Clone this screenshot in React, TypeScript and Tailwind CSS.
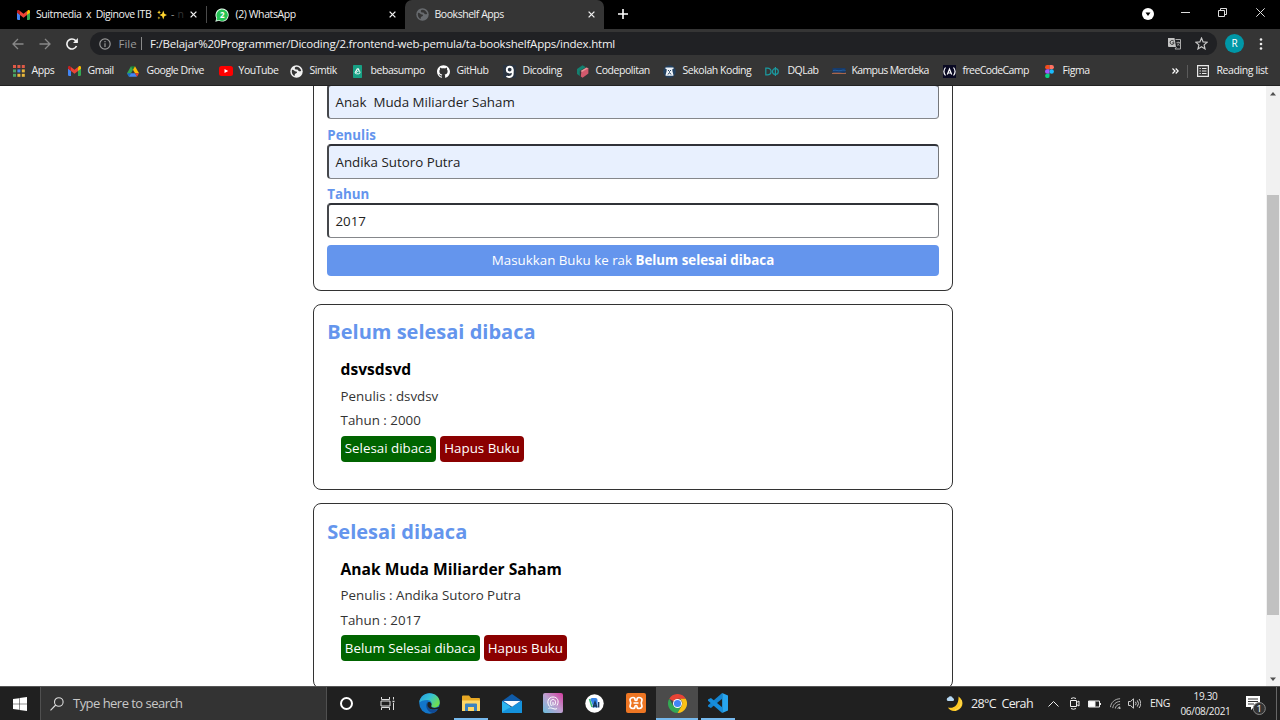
import type { ReactNode } from "react";
import { SiGithub } from "react-icons/si";

const Gmail = () => (
  <svg viewBox="0 0 24 18" className="h-[10px] w-[13px]">
    <path d="M0 2v14.5C0 17.3.7 18 1.5 18H5.5V8L0 4z" fill="#4285f4" />
    <path d="M18.5 18h4c.8 0 1.5-.7 1.5-1.5V2l-5.500 6z" fill="#34a853" />
    <path d="M18.500 2v7L24 5V2.500C24 .3 21.300-.8 19.700.600z" fill="#fbbc04" />
    <path d="M5.500 9V1.500L12 6.500l6.500-5V9L12 14z" fill="#ea4335" />
    <path d="M0 2.500V5l5.500 4V1.500L4.300.600C2.600-.8 0 .3 0 2.500z" fill="#c5221f" />
  </svg>
);

const WhatsApp = () => (
  <svg viewBox="0 0 14 14" className="size-[14px]">
    <path d="M.3 13.700l1-3.500A6.600 6.600 0 1 1 3.900 12.800z" fill="#e8fbee" />
    <path d="M1.400 12.600l.8-2.600A5.700 5.700 0 1 1 4.100 12z" fill="#25c354" />
    <text x="7.300" y="9.900" textAnchor="middle" fontSize="8" fontWeight="700" fontFamily="Open Sans, sans-serif" fill="#fff">2</text>
  </svg>
);

const Globe = ({ dim = false }: { dim?: boolean }) => (
  <svg viewBox="0 0 24 24" className="size-[13px]">
    <circle cx="12" cy="12" r="11.500" fill={dim ? "#686b6f" : "#f1f1f1"} />
    <path d="M3.500 9c3.500-.5 4 3 8 3 2 0 2 3 0 3-3 .5-3 3-2.500 5.500C4.500 19 2.500 14 3.500 9z" fill="#353535" />
    <path d="M10 3.500c5-1.500 9.500 2 10.700 7-3 2-4.700.5-6.200-1.500-1.500-1.500-4 .5-5-1.500S8.500 4.500 10 3.500z" fill="#353535" />
  </svg>
);

const Sparkles = () => (
  <svg viewBox="0 0 12 12" className="h-[10px] w-[10px] shrink-0" fill="#ffd42e">
    <path d="M7.500 .6l1.400 4L12 6 8.900 7.400 7.500 11.400 6.100 7.400 3 6l3.100-1.400zM2.500.3l.7 1.800 1.600.7-1.600.7-.7 1.800-.7-1.800L.2 2.800l1.600-.7zM2.300 7.500l.5 1.500 1.400.5-1.400.5-.5 1.500-.5-1.500-1.400-.5L1.800 9z" />
  </svg>
);

const Close = () => (
  <svg viewBox="0 0 8 8" className="size-[7px]" stroke="#f1f1f1" strokeWidth="1.500">
    <path d="M.7.7l6.600 6.600M7.300.7L.7 7.300" />
  </svg>
);

const AppsGrid = () => (
  <svg viewBox="0 0 12 12" className="ml-[1px] size-[12px]">
    {["#e05a47", "#e05a47", "#e05a47", "#4ba564", "#4d86e8", "#e8b73b", "#4ba564", "#e8b73b", "#e8b73b"].map((c, i) => (
      <rect key={i} x={(i % 3) * 4.4} y={Math.floor(i / 3) * 4.4} width="3" height="3" fill={c} />
    ))}
  </svg>
);

const Drive = () => (
  <svg viewBox="0 0 24 21" className="h-[11px] w-[12px]">
    <path d="M8 0h8l-4 7z" fill="#188038" />
    <path d="M8 0L0 14l4 7 8-14z" fill="#34a853" />
    <path d="M16 0l8 14h-8L12 7z" fill="#fbbc04" />
    <path d="M0 14h8l-4 7z" fill="#1967d2" />
    <path d="M8 14h8l4 7H4z" fill="#4285f4" />
    <path d="M16 14h8l-4 7z" fill="#ea4335" />
  </svg>
);

const YouTube = () => (
  <svg viewBox="0 0 14 10" className="h-[10px] w-[14px]">
    <rect width="14" height="10" rx="2.500" fill="#f00" />
    <path d="M5.500 2.900v4.200L9.200 5z" fill="#fff" />
  </svg>
);

const Bebas = () => (
  <svg viewBox="0 0 9 13" className="ml-[2px] h-[13px] w-[9px]">
    <rect width="9" height="13" rx=".7" fill="#17a084" />
    <path d="M4.800 3.200l1.600 2.500M4.500 3.500L2.500 7" stroke="#fff" strokeWidth="1.200" />
    <path d="M2 7.200q0 1.600 1.500 1.600h2.200Q7 8.800 7 7.200q0-1.300-1.300-1.300-1 0-1.700 1.300z" fill="none" stroke="#e6faf5" />
  </svg>
);

const Dicoding = () => (
  <svg viewBox="0 0 13 13" className="size-[13px]">
    <rect width="13" height="13" fill="#2a3441" />
    <g fill="none" stroke="#fff" strokeWidth="1.900">
      <circle cx="6.700" cy="4.600" r="2.900" />
      <path d="M9.700 4.500v4.200c0 3.500-4.500 3.900-6.200 2.400" />
    </g>
  </svg>
);

const Codepolitan = () => (
  <svg viewBox="0 0 13 13" className="size-[13px]">
    <path d="M6.500.3L1 3.900v5.200l2.800 2V5.700l6.200-3.500z" fill="#14806f" />
    <path d="M5.300 6.700L12.400 2.900v5.500L6.600 12.700l-1.800-1.200z" fill="#d3596c" />
    <path d="M4.500 5.900l6-3.300 1.900.7L6 7z" fill="#f0939a" />
  </svg>
);

const Sekolah = () => (
  <svg viewBox="0 0 13 13" className="size-[13px]">
    <circle cx="6.500" cy="6.500" r="6.300" fill="#23405f" />
    <path d="M2.500 2.500h8v1.500H9.400v2l1 3.700v1.100H2.600V9.700l1-3.700V4H2.500z" fill="#edf2f7" />
    <path d="M5 5l1.500 1.500L8 5M5 9.500l1.500-2L8 9.500" stroke="#23405f" fill="none" />
  </svg>
);

const DQ = () => (
  <svg viewBox="0 0 14 9" className="h-[9px] w-[14px]" fill="none" stroke="#1b9aa0" strokeWidth="1.200">
    <path d="M.8 1.200h1.500c5 0 5 6.600 0 6.600H.8zM10.400 0v9" />
    <circle cx="10.400" cy="4.500" r="2.900" />
  </svg>
);

const Kampus = () => (
  <svg viewBox="0 0 14 8" className="h-[8px] w-[14px]">
    <path d="M.5 1h13v4.700H.5z" fill="#163b6c" />
    <path d="M1 3.500c3-1 5 1 8 0s4 0 4.500 0" stroke="#265f9c" fill="none" />
    <path d="M0 6.100c4-.9 9 .3 14-.3v1H0z" fill="#cf7551" />
  </svg>
);

const Fcc = () => (
  <svg viewBox="0 0 13 13" className="size-[13px]">
    <rect width="13" height="13" fill="#0a0a23" />
    <g fill="none" stroke="#fff" strokeWidth="1.200">
      <path d="M2.500 2.500c-2 2.500-2 5.500 0 8M10.500 2.500c2 2.500 2 5.500 0 8M4.300 9.500L6.500 4l2.200 5.500M5 8h3" />
    </g>
  </svg>
);

const Figma = () => (
  <svg viewBox="0 0 9 13" className="ml-[2px] h-[13px] w-[9px]">
    <path d="M4.500 0v4.300H2.200a2.100 2.100 0 0 1 0-4.300z" fill="#f24e1e" />
    <path d="M4.500 0h2.300a2.100 2.100 0 0 1 0 4.300H4.500z" fill="#ff7262" />
    <path d="M4.500 4.300v4.400H2.200a2.200 2.200 0 0 1 0-4.400z" fill="#a259ff" />
    <circle cx="6.700" cy="6.500" r="2.200" fill="#1abcfe" />
    <path d="M4.500 8.700v2.200a2.200 2.200 0 1 1-2.300-2.200z" fill="#0acf83" />
  </svg>
);

function Bookmark({ icon, text, w, t }: { icon: ReactNode; text: string; w: string; t?: string }) {
  return (
    <div className={`flex shrink-0 items-center ${w}`}>
      <span className="flex w-[19.500px] shrink-0 items-center">{icon}</span>
      <span className={`whitespace-nowrap ${t ?? "tracking-[-0.45px]"}`}>{text}</span>
    </div>
  );
}

function Tabs() {
  return (
    <div className="flex h-[29px] shrink-0 bg-black text-[10.500px] text-[#f0f0f0]">
      <div className="flex w-[206px] items-center pl-[17px]">
        <Gmail />
        <div className="ml-[6px] flex w-[149px] items-center overflow-hidden whitespace-pre tracking-[-0.42px]">
          <span className="w-[120.500px]">Suitmedia  x  Diginove ITB</span>
          <Sparkles />
          <span className="w-[11px] text-[#999]">  -</span>
          <span className="text-[#333]">n</span>
        </div>
        <span className="ml-[5px]"><Close /></span>
      </div>
      <div className="my-[6px] w-px bg-[#4a4a4a]" />
      <div className="flex w-[198px] items-center pl-[8px]">
        <WhatsApp />
        <span className="ml-[6.500px] w-[153.500px] tracking-[-0.4px]">(2) WhatsApp</span>
        <Close />
      </div>
      <div className="flex w-[199px] items-center rounded-t-[7px] bg-[#353535] pl-[11px]">
        <Globe dim />
        <span className="ml-[5.500px] w-[153.500px] tracking-[-0.45px]">Bookshelf Apps</span>
        <Close />
      </div>
      <svg viewBox="0 0 10 10" className="ml-[14px] mt-[9px] size-[10px]" stroke="#fff" strokeWidth="1.600">
        <path d="M5 0v10M0 5h10" />
      </svg>
      <div className="ml-auto flex items-start">
        <svg viewBox="0 0 12 12" className="mr-[27px] mt-[8px] size-[12px]">
          <circle cx="6" cy="6" r="6" fill="#fff" />
          <path d="M3.500 4.500h5L6 8z" fill="#000" />
        </svg>
        <svg viewBox="0 0 9 9" className="mr-[28px] mt-[8px] size-[9px]" stroke="#ddd">
          <path d="M0 4.500h9" />
        </svg>
        <svg viewBox="0 0 9 9" className="mr-[29px] mt-[8px] size-[9px]" stroke="#ddd" fill="none">
          <path d="M.5 2.500h6v6h-6zM2.500 2V.5h6v6H7" />
        </svg>
        <svg viewBox="0 0 9 9" className="mr-[15px] mt-[8px] size-[9px]" stroke="#ddd">
          <path d="M.3.3l8.400 8.400M8.700.3L.3 8.700" />
        </svg>
      </div>
    </div>
  );
}

function Toolbar() {
  return (
    <div className="flex h-[29px] shrink-0 items-center bg-[#353535] pl-[12px]">
      <svg viewBox="0 0 12 12" className="size-[12px]" stroke="#888" strokeWidth="1.300" fill="none">
        <path d="M11.500 6H1M6 1L1 6l5 5" />
      </svg>
      <svg viewBox="0 0 12 12" className="ml-[15px] size-[12px]" stroke="#888" strokeWidth="1.300" fill="none">
        <path d="M.5 6H11M6 1l5 5-5 5" />
      </svg>
      <svg viewBox="0 0 12 12" className="ml-[15px] size-[12px]" stroke="#f4f4f4" strokeWidth="1.600" fill="none">
        <path d="M10.500 8A5 5 0 1 1 9.600 2.600L11 4.200" />
        <path d="M11.900 0v5H7z" fill="#f4f4f4" stroke="none" />
      </svg>
      <div className="ml-[12px] flex h-[23px] w-[1127px] items-center rounded-full bg-[#202124] pl-[9px] text-[11.500px] text-[#f2f2f2]">
        <svg viewBox="0 0 12 12" className="size-[12px]" stroke="#999" strokeWidth="1.200" fill="none">
          <circle cx="6" cy="6" r="5.200" />
          <path d="M6 5.300V9M6 3v1.300" />
        </svg>
        <span className="ml-[7.500px] w-[22.500px] text-[#9a9a9a]">File</span>
        <span className="h-[13px] w-px bg-[#8a8a8a]" />
        <span className="ml-[8px] tracking-[-0.22px]">F:/Belajar%20Programmer/Dicoding/2.frontend-web-pemula/ta-bookshelfApps/index.html</span>
        <svg viewBox="0 0 13 13" className="ml-auto size-[13px]">
          <path d="M0 1h6.500l1.500 9H1a1 1 0 0 1-1-1z" fill="#c4c4c4" />
          <path d="M7.500 2.500h5v9.500H7l1.500-2" fill="none" stroke="#aaa" />
          <path d="M5.800 4.300a2 2 0 1 0 .3 1.500H4.300" fill="none" stroke="#333" />
          <path d="M8.500 5.500H12M10.200 4.500v1M11.500 5.500c-.3 1.600-1.500 2.500-2.500 3M9.300 6.500l2 2.300" fill="none" stroke="#aaa" strokeWidth=".8" />
        </svg>
        <svg viewBox="0 0 24 24" className="ml-[14px] mr-[9px] size-[13px]" fill="none" stroke="#c8c8c8" strokeWidth="2.200">
          <path d="M12 2l3 7 7.500.6-5.700 5 1.700 7.400L12 18l-6.500 4 1.700-7.400-5.700-5L9 9z" />
        </svg>
      </div>
      <div className="ml-[8px] flex size-[19px] items-center justify-center rounded-full bg-[#0097a7] text-[10px] text-white">R</div>
      <svg viewBox="0 0 4 12" className="ml-[15px] h-[12px] w-[4px]" fill="#eee">
        <circle cx="2" cy="1.500" r="1.300" /><circle cx="2" cy="6" r="1.300" /><circle cx="2" cy="10.500" r="1.300" />
      </svg>
    </div>
  );
}

function Bookmarks() {
  return (
    <div className="flex h-[28px] shrink-0 items-center border-b border-[#222] bg-[#353535] pb-[1px] pl-[12px] text-[10.500px] text-[#f0f0f0]">
      <Bookmark w="w-[56px]" icon={<AppsGrid />} text="Apps" />
      <Bookmark w="w-[59px]" icon={<Gmail />} text="Gmail" />
      <Bookmark w="w-[92px]" icon={<Drive />} text="Google Drive" />
      <Bookmark w="w-[71px]" icon={<YouTube />} text="YouTube" />
      <Bookmark w="w-[61px]" icon={<Globe />} text="Simtik" />
      <Bookmark w="w-[86px]" icon={<Bebas />} text="bebasumpo" />
      <Bookmark w="w-[66px]" icon={<SiGithub className="size-[13px] text-white" />} text="GitHub" />
      <Bookmark w="w-[73px]" icon={<Dicoding />} text="Dicoding" />
      <Bookmark w="w-[87px]" icon={<Codepolitan />} text="Codepolitan" />
      <Bookmark w="w-[102px]" icon={<Sekolah />} text="Sekolah Koding" />
      <Bookmark w="w-[67px]" icon={<DQ />} text="DQLab" t="ml-[3px] tracking-[-0.5px]" />
      <Bookmark w="w-[111px]" icon={<Kampus />} text="Kampus Merdeka" t="tracking-[-0.62px]" />
      <Bookmark w="w-[100px]" icon={<Fcc />} text="freeCodeCamp" t="tracking-[-0.6px]" />
      <Bookmark w="w-[60px]" icon={<Figma />} text="Figma" />
      <svg viewBox="0 0 7 6" className="ml-[69px] h-[6px] w-[7px]" fill="none" stroke="#fff" strokeWidth="1.200">
        <path d="M.5.5L3 3 .5 5.500M3.700.5L6.200 3 3.700 5.500" />
      </svg>
      <span className="ml-[8px] h-[13px] w-px bg-[#5b5b5b]" />
      <svg viewBox="0 0 12 12" className="ml-[9px] size-[12px]" fill="none" stroke="#e8e8e8" strokeWidth="1.200">
        <path d="M.6.600h10.800v10.800H.6zM2.500 3.500h1.300M5 3.500h4.500M2.500 6h1.300M5 6h4.500M2.500 8.500h1.300M5 8.500h4.500" />
      </svg>
      <span className="ml-[7.500px] whitespace-nowrap tracking-[-0.4px]">Reading list</span>
    </div>
  );
}

function Field({ value, fill }: { value: string; fill: string }) {
  return (
    <div className={`flex h-[35px] shrink-0 items-center whitespace-pre rounded-[4px] border border-l-2 border-t-2 border-b-[#85878b] border-l-[#45474b] border-r-[#75777b] border-t-[#303238] pl-[6.200px] pt-[1px] text-[#222] ${fill}`}>
      {value}
    </div>
  );
}

const Label = ({ text, h }: { text: string; h: string }) => (
  <div className={`flex shrink-0 items-end font-bold leading-[18px] text-[#6495ed] ${h}`}>{text}</div>
);

function Shelf({ name, title, author, year, action }: { name: string; title: string; author: string; year: string; action: string }) {
  return (
    <section className="mt-[13.200px] h-[186px] shrink-0 rounded-[8px] border border-[#333] px-[13.300px] pt-[13.200px] last:mt-[13.200px]">
      <h2 className="text-[20px] font-bold leading-[27px] text-[#6495ed]">{name}</h2>
      <div className="ml-[13.300px] mt-[13px]">
        <h3 className="text-[15.600px] font-bold leading-[22px] text-black">{title}</h3>
        <p className="mt-[6.400px] leading-[18px]">Penulis : {author}</p>
        <p className="mt-[6.600px] leading-[18px]">Tahun : {year}</p>
        <div className="mt-[6.600px] flex gap-[4px] text-white">
          <button className="h-[26px] rounded-[4px] bg-[#006400] px-[4.200px] pt-[1px]">{action}</button>
          <button className="h-[26px] rounded-[4px] bg-[#8b0000] px-[4.200px] pt-[1px]">Hapus Buku</button>
        </div>
      </div>
    </section>
  );
}

function Page() {
  return (
    <div className="flex h-[600px] shrink-0 overflow-hidden bg-white text-[13.333px] text-[#333]">
      <main className="flex flex-1 justify-center overflow-hidden">
        <div className="flex w-[640px] flex-col">
          <section className="-mt-[2px] flex h-[207px] shrink-0 flex-col rounded-b-[8px] border border-t-0 border-[#333] px-[13.300px]">
            <Field value="Anak  Muda Miliarder Saham" fill="bg-[#e8f0fe]" />
            <Label text="Penulis" h="h-[25px]" />
            <Field value="Andika Sutoro Putra" fill="bg-[#e8f0fe]" />
            <Label text="Tahun" h="h-[24.400px]" />
            <Field value="2017" fill="bg-white" />
            <button className="mt-[6.600px] h-[31px] shrink-0 rounded-[4px] bg-[#6495ed] pt-[1px] text-white">
              Masukkan Buku ke rak <b>Belum selesai dibaca</b>
            </button>
          </section>
          <Shelf name="Belum selesai dibaca" title="dsvsdsvd" author="dsvdsv" year="2000" action="Selesai dibaca" />
          <Shelf name="Selesai dibaca" title="Anak Muda Miliarder Saham" author="Andika Sutoro Putra" year="2017" action="Belum Selesai dibaca" />
        </div>
      </main>
      <div className="flex w-[14px] flex-col items-center bg-[#f1f1f1]">
        <svg viewBox="0 0 6 4" className="mt-[6px] h-[4px] w-[6px]" fill="#505050"><path d="M0 3.500L3 0l3 3.500z" /></svg>
        <div className="mt-[99px] h-[420px] w-[12px] bg-[#c1c1c1]" />
        <svg viewBox="0 0 6 4" className="mb-[5px] mt-auto h-[4px] w-[6px]" fill="#505050"><path d="M0 .5L3 4l3-3.500z" /></svg>
      </div>
    </div>
  );
}

function TaskSlot({ children, open, active }: { children: ReactNode; open?: boolean; active?: boolean }) {
  return (
    <div className={`flex h-full w-[41.300px] shrink-0 flex-col items-center ${active ? "bg-[#4b4b4b]" : ""}`}>
      <div className="flex flex-1 items-center pt-[1px]">{children}</div>
      <div className={`h-[2px] ${active ? "w-full" : "w-[34px]"} ${open || active ? "bg-[#76b9ed]" : ""}`} />
    </div>
  );
}

function Taskbar() {
  return (
    <div className="flex h-[34px] shrink-0 items-center border-t border-[#555] bg-[#202020] text-[#eee]">
      <div className="flex w-[40px] justify-center">
        <svg viewBox="0 0 14 14" className="size-[14px]" fill="#fff">
          <path d="M0 2l6-.8v5.500H0zM6.500 1.100L14 0v6.700H6.500zM0 7.200h6v5.500l-6-.8zM6.500 7.200H14V14l-7.500-1.100z" />
        </svg>
      </div>
      <div className="flex h-full w-[287px] items-center border border-y-0 border-[#505050] bg-[#333] pl-[9px] text-[13px] text-[#c8c8c8]">
        <svg viewBox="0 0 14 14" className="size-[14px]" fill="none" stroke="#ddd" strokeWidth="1.100">
          <circle cx="8.800" cy="5" r="4.300" /><path d="M5.700 8L.5 13.300" />
        </svg>
        <span className="ml-[9px] tracking-[-0.53px]">Type here to search</span>
      </div>
      <div className="-ml-[1px] flex h-full">
        <TaskSlot>
          <span className="size-[13px] rounded-full border-2 border-white" />
        </TaskSlot>
        <TaskSlot>
          <svg viewBox="0 0 15 13" className="h-[13px] w-[15px]" fill="none" stroke="#ddd">
            <path d="M1.500 0v2.500h8V0M1.500 13v-2.500h8V13M1 4h9v5H1zM13.500 0v2.500M13.500 6v7" /><path d="M12.500 4.500h2" strokeWidth="1.500" />
          </svg>
        </TaskSlot>
        <TaskSlot>
          <svg viewBox="0 0 24 24" className="size-[21px]">
            <defs>
              <linearGradient id="eg" x1="0" y1="0" x2="1" y2=".6"><stop offset="0" stopColor="#2499dd" /><stop offset=".5" stopColor="#35c1d6" /><stop offset="1" stopColor="#6fe04e" /></linearGradient>
            </defs>
            <circle cx="12" cy="12" r="11.700" fill="#1276ca" />
            <path d="M.3 11C1 4.500 6 .3 12 .3 19 .3 23.700 5 23.700 10.500c0 4-3 6-6.200 6-2.500 0-4-1-3.500-2 1.500-2.500 0-6.500-4.700-6.500C5 8 1.500 9.500.3 11z" fill="url(#eg)" />
            <path d="M10.500 9.500C6 12.500 8.500 22.500 16 22.900c2.500-.6 4.500-2.400 5.500-4.400-6 2.800-12-.5-12-5.500 0-1.500.5-2.500 1-3.500z" fill="#104a94" />
            <path d="M14 14.500c-.8 2 3 3.600 7.500 1.800.8-.5 1.700.2 1.300 1-6.300 3.600-13.300 1-13.300-4 0-2 1-3 1.500-3 2.700 0 4 2.400 3 4.200z" fill="#202020" />
          </svg>
        </TaskSlot>
        <TaskSlot open>
          <svg viewBox="0 0 20 17" className="h-[17px] w-[20px]">
            <path d="M1 1.500Q1 .5 2 .5h6L10 3h8q1 0 1 1v12H1z" fill="#e8a824" />
            <path d="M1 5.500h18V16H1z" fill="#ffd767" />
            <path d="M4 16V9.500Q4 8.500 5 8.500h10q1 0 1 1V16h-3v-4H7v4z" fill="#3b82c0" />
          </svg>
        </TaskSlot>
        <TaskSlot>
          <svg viewBox="0 0 20 19" className="h-[19px] w-[20px]">
            <path d="M0 7l10-7 10 7v5H0z" fill="#0f5ba8" />
            <path d="M0 7l10 6.500L20 7v11q0 1-1 1H1q-1 0-1-1z" fill="#2cb5ee" />
            <path d="M0 18L20 7v11q0 1-1 1H1z" fill="#1492dc" />
            <path d="M1.500 7h17L10 12.800z" fill="#f7fbff" />
          </svg>
        </TaskSlot>
        <TaskSlot>
          <svg viewBox="0 0 20 20" className="size-[20px]">
            <defs><linearGradient id="pg" x1="0" y1="1" x2="1" y2="0"><stop offset="0" stopColor="#69bddc" /><stop offset=".5" stopColor="#bda0cf" /><stop offset="1" stopColor="#d43b9f" /></linearGradient></defs>
            <rect width="20" height="20" rx="2" fill="url(#pg)" />
            <path d="M6.500 13.500C3 9 5.500 4 10 4s6.500 4 4 8.500M8.500 13c-2-3-1-6.500 1.500-6.500s3.500 3 1.500 5.500M10 9v3.500M5.500 15.500c3-2 6 2 8.500 0" fill="none" stroke="#fff" strokeWidth="1" />
          </svg>
        </TaskSlot>
        <TaskSlot>
          <svg viewBox="0 0 19 19" className="size-[19px]">
            <circle cx="9.500" cy="9.500" r="9.200" fill="#fff" />
            <path d="M5.500 5.500Q5.500 4 7 4h3.500Q12.500 4 12.500 6v7.500h-4z" fill="#3684e8" />
            <path d="M4.500 5L7 13" stroke="#39bb75" strokeWidth="1.600" />
            <path d="M8 13.500l2-5.500 2 5.500M8.500 12h3M13.700 8v5.500" fill="none" stroke="#17365d" strokeWidth="1.300" />
          </svg>
        </TaskSlot>
        <TaskSlot>
          <svg viewBox="0 0 20 20" className="size-[20px]">
            <rect width="20" height="20" rx="2" fill="#ee7623" />
            <path d="M7 4.500C4.300 4.500 3.500 6.500 4.300 8.200q1 1.800 0 3.600C3.500 13.500 4.300 15.500 7 15.500q2 0 2-2 0-1 1-1t1 1q0 2 2 2c2.700 0 3.500-2 2.700-3.700q-1-1.800 0-3.600C16.500 6.500 15.700 4.500 13 4.500q-2 0-2 2 0 1-1 1t-1-1q0-2-2-2z" fill="none" stroke="#fff" strokeWidth="1.700" />
            <path d="M7.500 10h5" stroke="#fff" strokeWidth="1.600" />
          </svg>
        </TaskSlot>
        <TaskSlot active>
          <svg viewBox="0 0 24 24" className="size-[19px]">
            <path d="M12 12L1.600 6A12 12 0 0 1 22.400 6H12z" fill="#e94335" />
            <path d="M1.600 6A12 12 0 0 0 12 24l5.200-9L12 12 6.800 15z" fill="#34a853" />
            <path d="M22.400 6A12 12 0 0 1 12 24l5.200-9c1.800-3.500.8-7-2.200-9z" fill="#fbc116" />
            <circle cx="12" cy="12" r="5.700" fill="#fff" /><circle cx="12" cy="12" r="4.500" fill="#4285f4" />
          </svg>
        </TaskSlot>
        <TaskSlot open>
          <svg viewBox="0 0 24 24" className="size-[20px]">
            <path d="M17 0l7 3v18l-7 3z" fill="#27a5ef" />
            <path d="M17 0v7L3.500 18 0 16.300v-1.600z" fill="#1484d0" />
            <path d="M17 24v-7L3.500 6 0 7.700v1.600z" fill="#168ddd" />
          </svg>
        </TaskSlot>
      </div>
      <div className="ml-auto flex h-full items-center">
        <svg viewBox="0 0 17 17" className="size-[17px]">
          <path d="M12.500 1.500c6 4 5 11.500-1.500 14-4 1.500-7.500-.3-9-3 7 1.500 11-4 10.500-11z" fill="#ffc923" />
          <path d="M15 5c1 5-2 9-6 10" fill="none" stroke="#ffdf62" />
          <path d="M2 6a1.800 1.800 0 0 1 .3-3.500 2.500 2.500 0 0 1 4.500.5 1.600 1.600 0 0 1 .3 3z" fill="#b6d8f3" />
        </svg>
        <span className="ml-[8px] w-[77px] whitespace-pre pt-[2px] text-[12.500px] tracking-[-0.6px]">28°C  Cerah</span>
        <svg viewBox="0 0 11 6" className="h-[6px] w-[11px]" fill="none" stroke="#eee"><path d="M.5 5.500l5-5 5 5" /></svg>
        <svg viewBox="0 0 11 13" className="ml-[10px] h-[13px] w-[11px]" fill="none" stroke="#eee">
          <path d="M1.500 3.500h6v6h-6zM7.500 5.500l2.500-1.500v5l-2.500-1.500M2 1.500Q4.500 0 7 1.500M2 11.500Q4.500 13 7 11.500" />
        </svg>
        <svg viewBox="0 0 13 8" className="ml-[8px] h-[8px] w-[13px]" fill="none" stroke="#eee">
          <path d="M.5 1h11v6H.5zM12.500 3v2" /><path d="M1 1.500h6v5H1z" fill="#fff" />
        </svg>
        <svg viewBox="0 0 12 12" className="ml-[9px] size-[11px]" fill="none" stroke="#bbb">
          <path d="M.5 10C1 5 5 1 11 .8M3 11C3.500 7 6.500 4 11 3.800M5.800 11.500C6 9 8 7 11 6.800M8.500 11.800C8.800 10.500 9.500 9.700 11 9.700" /><circle cx="10.500" cy="11" r=".7" fill="#fff" />
        </svg>
        <svg viewBox="0 0 13 11" className="ml-[7px] h-[11px] w-[13px]" fill="none" stroke="#ccc">
          <path d="M.5 3.500h2l3-2.700v9.400l-3-2.700h-2zM7.500 3.800q1.300 1.700 0 3.400M9.300 2.400q2.500 3.100 0 6.200M11.100 1q3.400 4.500 0 9" />
        </svg>
        <span className="ml-[9px] w-[27px] text-[10.500px] tracking-[-0.5px]">ENG</span>
        <div className="flex w-[57px] flex-col items-center text-[10px] leading-[15px] tracking-[-0.3px]">
          <span>19.30</span><span>06/08/2021</span>
        </div>
        <svg viewBox="0 0 20 20" className="ml-[12px] mt-[2px] h-[20px] w-[20px]">
          <path d="M0 1h14v11H8l-3 3v-3H0z" fill="#fff" />
          <path d="M2 4h10M2 6.500h10M2 9h6" stroke="#333" />
          <circle cx="13.300" cy="13.500" r="6" fill="#333" stroke="#888" />
          <text x="13.300" y="17" fontSize="9.500" textAnchor="middle" fontFamily="Open Sans, sans-serif" fill="#fff">1</text>
        </svg>
        <span className="ml-[10px] h-full w-px bg-[#666]" />
        <span className="w-[3px]" />
      </div>
    </div>
  );
}

export default function App() {
  return (
    <div className="flex h-[720px] w-[1280px] flex-col overflow-hidden font-['Open_Sans',sans-serif]">
      <Tabs />
      <Toolbar />
      <Bookmarks />
      <Page />
      <Taskbar />
    </div>
  );
}
